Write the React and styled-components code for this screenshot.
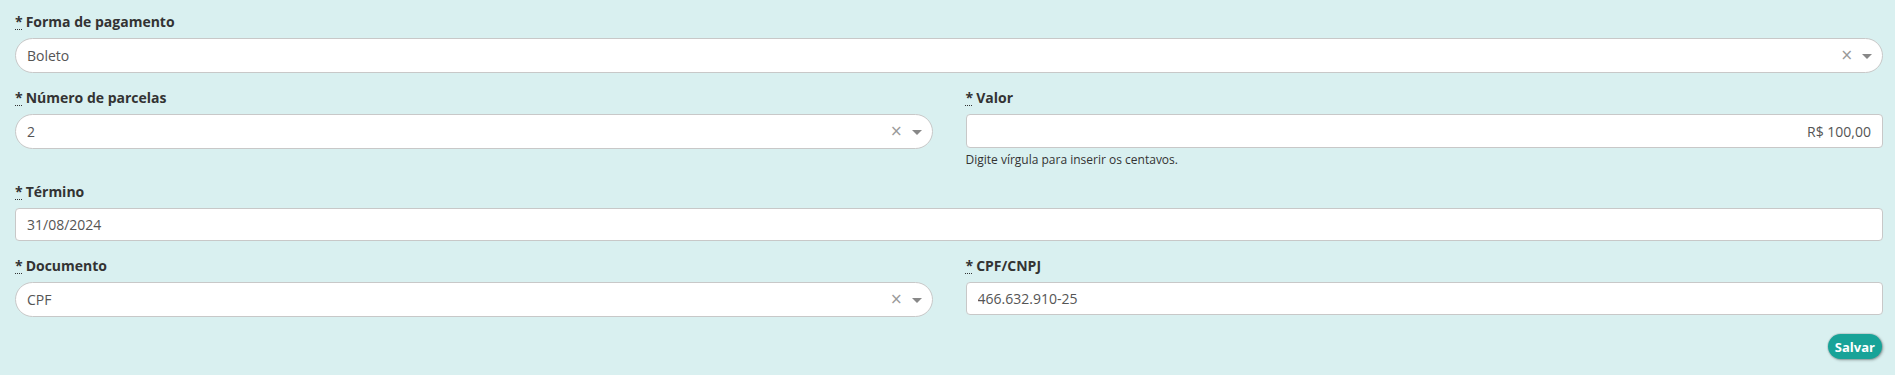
import React from "react";
import styled, { createGlobalStyle } from "styled-components";

const Global = createGlobalStyle`
  html, body { margin: 0; padding: 0; background: #d9f0f0; }
  body { font-family: "Open Sans", "Noto Sans", sans-serif; font-size: 14px; color: #333; }
  * { box-sizing: border-box; }
`;

const Form = styled.form`
  padding: 12px 12px 18px 15px;
  display: flex;
  flex-direction: column;
`;

const Row = styled.div`
  display: grid;
  grid-template-columns: ${(p) => (p.$split ? "1fr 1fr" : "1fr")};
  column-gap: 33px;
  margin-bottom: ${(p) => p.$mb ?? 15}px;
`;

const Field = styled.div`
  display: flex;
  flex-direction: column;
`;

const Label = styled.label`
  font-weight: 700;
  font-size: 14px;
  line-height: 20px;
  color: #333;
  margin-bottom: 6px;
  abbr {
    text-decoration: underline dotted;
    text-decoration-thickness: 1px;
    text-underline-offset: 2px;
    cursor: help;
    margin-right: 3px;
  }
`;

const SelectBox = styled.div`
  height: 35px;
  background: #fff;
  border: 1px solid #c8c8c8;
  border-radius: 18px;
  display: flex;
  align-items: center;
  padding: 0 10px 0 11px;
  color: #555;
  font-size: 14px;
`;

const Value = styled.span`
  flex: 1;
`;

const Clear = styled.span`
  color: #999;
  font-size: 15px;
  line-height: 1;
  margin-right: 9px;
  font-family: "DejaVu Sans", sans-serif;
`;

const Caret = styled.span`
  width: 0;
  height: 0;
  border-left: 5px solid transparent;
  border-right: 5px solid transparent;
  border-top: 5px solid #888;
  margin-top: 1px;
`;

const Input = styled.input`
  height: ${(p) => p.$h ?? 33}px;
  background: #fff;
  border: 1px solid #c8c8c8;
  border-radius: 4px;
  padding: 0 11px;
  font-family: inherit;
  font-size: 14px;
  color: #555;
  text-align: ${(p) => p.$align ?? "left"};
  outline: none;
  width: 100%;
`;

const Help = styled.small`
  font-size: 12px;
  color: #333;
  line-height: 17px;
  margin-top: 3px;
`;

const Actions = styled.div`
  display: flex;
  justify-content: flex-end;
  padding-right: 1px;
`;

const Button = styled.button`
  height: 25px;
  padding: 0 7px;
  border-radius: 13px;
  border: none;
  background: #18a398;
  color: #fff;
  font-family: inherit;
  font-weight: 700;
  font-size: 13px;
  box-shadow: 0 0 0 1px rgba(0, 0, 0, 0.08), 1px 1px 3px rgba(0, 0, 0, 0.35);
  cursor: pointer;
`;

const Req = () => <abbr title="obrigatório">*</abbr>;

const Select = ({ value }) => (
  <SelectBox>
    <Value>{value}</Value>
    <Clear>×</Clear>
    <Caret />
  </SelectBox>
);

export default function App() {
  return (
    <>
      <Global />
      <Form onSubmit={(e) => e.preventDefault()}>
        <Row $mb={15}>
          <Field>
            <Label><Req />Forma de pagamento</Label>
            <Select value="Boleto" />
          </Field>
        </Row>
        <Row $split $mb={14}>
          <Field>
            <Label><Req />Número de parcelas</Label>
            <Select value="2" />
          </Field>
          <Field>
            <Label><Req />Valor</Label>
            <Input defaultValue="R$ 100,00" $align="right" $h={34} />
            <Help>Digite vírgula para inserir os centavos.</Help>
          </Field>
        </Row>
        <Row $mb={15}>
          <Field>
            <Label><Req />Término</Label>
            <Input defaultValue="31/08/2024" />
          </Field>
        </Row>
        <Row $split $mb={17}>
          <Field>
            <Label><Req />Documento</Label>
            <Select value="CPF" />
          </Field>
          <Field>
            <Label><Req />CPF/CNPJ</Label>
            <Input defaultValue="466.632.910-25" />
          </Field>
        </Row>
        <Actions>
          <Button type="submit">Salvar</Button>
        </Actions>
      </Form>
    </>
  );
}
